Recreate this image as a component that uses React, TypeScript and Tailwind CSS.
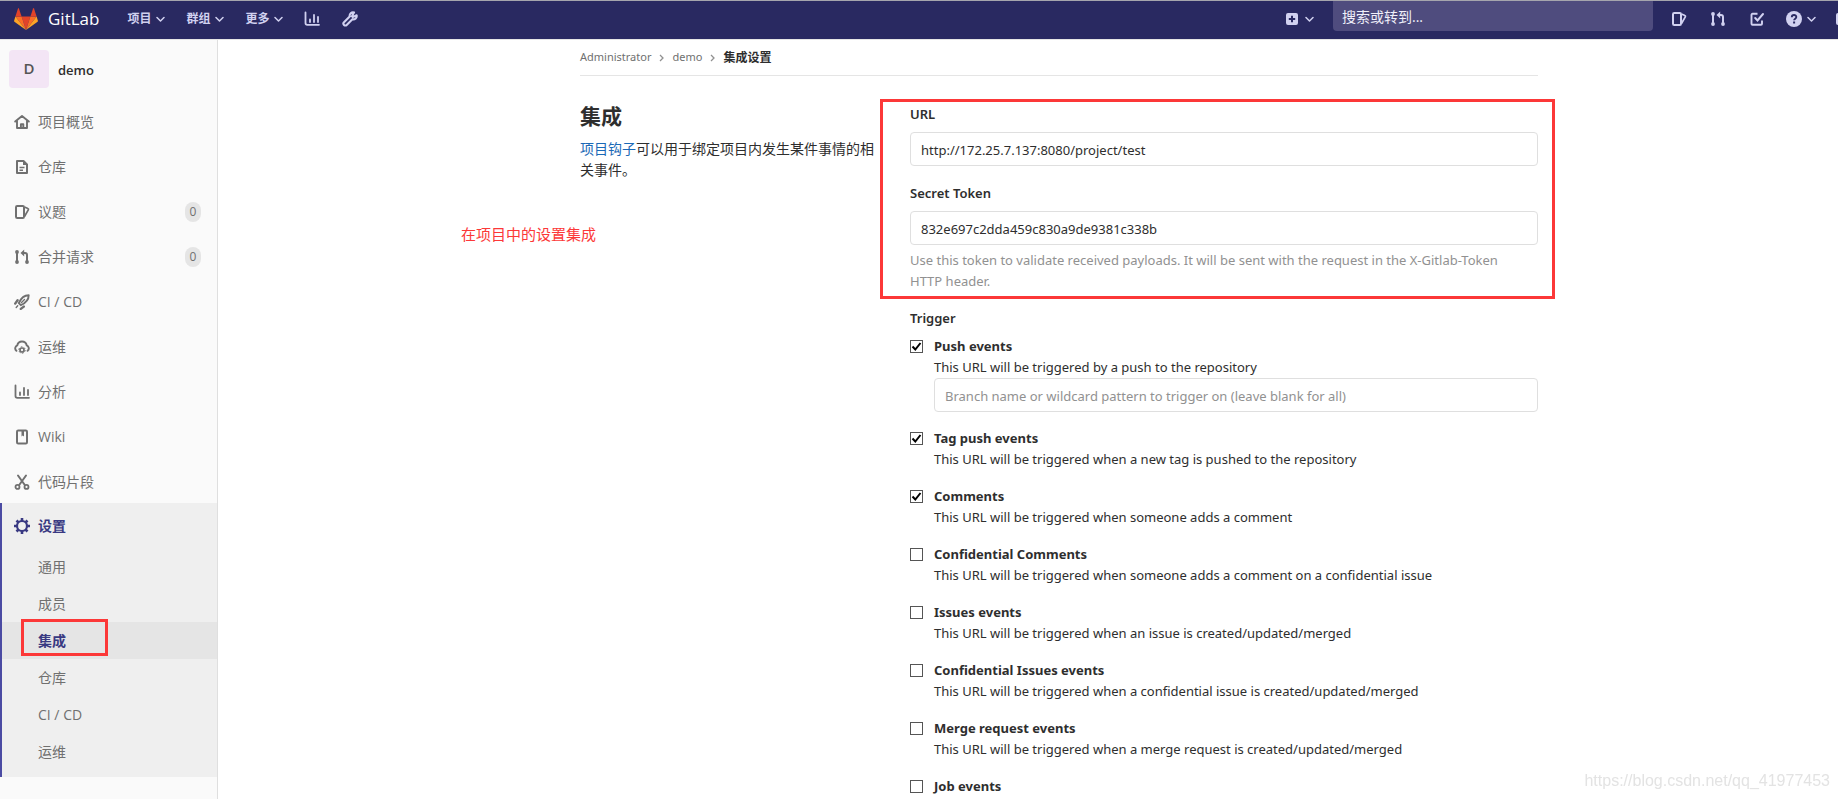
import type { ReactNode } from 'react'

type IconName =
  | 'home' | 'doc' | 'issues' | 'merge' | 'rocket' | 'cloud' | 'chart'
  | 'book' | 'scissors' | 'gear' | 'wrench' | 'plus' | 'todo' | 'help'

const icons: Record<IconName, ReactNode> = {
  home: (
    <path d="M1.2 7.6 8 2l6.8 5.6M3 6.8V14h10V6.8M6.9 13.5v-3.2h2.4v3.2" fill="none" stroke="currentColor" strokeWidth="1.9" strokeLinejoin="round" strokeLinecap="round" />
  ),
  doc: (
    <>
      <path d="M3 2h6.5L13 5.500V14H3z" fill="none" stroke="currentColor" strokeWidth="2" strokeLinejoin="round" />
      <path d="M9 1.500 13.500 6H9z" fill="currentColor" />
      <path d="M5.500 8.500h5M5.500 11.200h3.500" stroke="currentColor" strokeWidth="1.4" />
    </>
  ),
  issues: (
    <>
      <rect x="2" y="2" width="8" height="12" rx="1.200" fill="none" stroke="currentColor" strokeWidth="2" />
      <path d="m10.500 3 3.400 1.500c.5.200.7.700.500 1.200L10.500 12.500" fill="none" stroke="currentColor" strokeWidth="1.700" />
    </>
  ),
  merge: (
    <>
      <path d="M3 3v10M8 4h3a2 2 0 0 1 2 2v7" fill="none" stroke="currentColor" strokeWidth="2" />
      <path d="M10.200.5v7L6.500 4z" fill="currentColor" />
      <circle cx="3" cy="3" r="1.900" fill="currentColor" />
      <circle cx="3" cy="13" r="1.900" fill="currentColor" />
      <circle cx="13" cy="13" r="1.900" fill="currentColor" />
    </>
  ),
  rocket: (
    <>
      <path d="M14.700 1.300C10.500 1.300 7 4.200 4.800 9.200l2 2C11.800 9 14.700 5.500 14.700 1.300z" fill="none" stroke="currentColor" strokeWidth="1.900" strokeLinejoin="round" />
      <path d="M3.600 6.200 1.200 9.600M9.800 12.600l-3 2.300" stroke="currentColor" strokeWidth="2.400" strokeLinecap="round" />
      <path d="m7.500 8.500 3-3M3.700 11.800l-1.500 1.600" stroke="currentColor" strokeWidth="1.400" strokeLinecap="round" />
    </>
  ),
  cloud: (
    <>
      <path d="M2.400 11.800A3.200 3.200 0 0 1 3.300 6.300 4.800 4.800 0 0 1 12.700 6.300 3.200 3.200 0 0 1 13.600 11.800" fill="none" stroke="currentColor" strokeWidth="1.900" strokeLinecap="round" />
      <circle cx="8" cy="11" r="2" fill="none" stroke="currentColor" strokeWidth="1.700" />
      <circle cx="8" cy="11" r="3.200" fill="none" stroke="currentColor" strokeWidth="1" strokeDasharray="1.700 1.650" />
    </>
  ),
  chart: (
    <>
      <path d="M1.500 1.500V12a1.800 1.800 0 0 0 1.800 1.800H15" fill="none" stroke="currentColor" strokeWidth="1.800" strokeLinecap="round" />
      <path d="M6 8.500V11M10 4v7M14 6v5" stroke="currentColor" strokeWidth="1.800" strokeLinecap="round" />
    </>
  ),
  book: (
    <>
      <rect x="3" y="1.500" width="10" height="13" rx="1.200" fill="none" stroke="currentColor" strokeWidth="2" />
      <path d="M7.500 1.500h2.500V7.500L8.700 6.500 7.500 7.500z" fill="currentColor" />
    </>
  ),
  scissors: (
    <>
      <path d="M4 1.500 10.800 11M12 1.500 5.200 11" stroke="currentColor" strokeWidth="2" strokeLinecap="round" />
      <circle cx="3.500" cy="12.900" r="2" fill="none" stroke="currentColor" strokeWidth="1.800" />
      <circle cx="12.500" cy="12.900" r="2" fill="none" stroke="currentColor" strokeWidth="1.800" />
    </>
  ),
  gear: (
    <>
      <circle cx="8" cy="8" r="5" fill="none" stroke="currentColor" strokeWidth="2.200" />
      <path d="M8 0v3M8 13v3M0 8h3M13 8h3M2.500 2.500l2 2M11.500 11.500l2 2M2.500 13.500l2-2M11.500 4.500l2-2" stroke="currentColor" strokeWidth="2.600" />
    </>
  ),
  wrench: (
    <path d="M14.600 4.300l-2.800 1.300-1.400-1.400L12 1.500C9.500.9 7.200 2.800 7.700 5.500L2 11.200a1.900 1.900 0 0 0 2.700 2.700l5.700-5.600c2.600.5 4.800-1.500 4.200-4zM9.200 4.500l2.300 2.300" fill="none" stroke="currentColor" strokeWidth="2.100" strokeLinejoin="round" />
  ),
  plus: (
    <path fillRule="evenodd" d="M4 2h8a2 2 0 0 1 2 2v8a2 2 0 0 1-2 2H4a2 2 0 0 1-2-2V4a2 2 0 0 1 2-2zm3 2.800V7H4.800v2H7v2.200h2V9h2.200V7H9V4.800z" fill="currentColor" />
  ),
  todo: (
    <>
      <path d="M8.500 2.800H3.500a1 1 0 0 0-1 1v9a1 1 0 0 0 1 1h8.500a1 1 0 0 0 1-1V9.500" fill="none" stroke="currentColor" strokeWidth="1.900" />
      <path d="m6.200 7 2.300 2.400L14 3" fill="none" stroke="currentColor" strokeWidth="2" strokeLinecap="round" />
    </>
  ),
  help: (
    <>
      <circle cx="8" cy="8" r="8" fill="currentColor" />
      <path d="M5.800 6.200C5.800 3.200 10.300 3.300 10.300 6c0 1.700-2.200 1.600-2.200 3.300" fill="none" stroke="#292961" strokeWidth="1.900" />
      <rect x="7.100" y="10.500" width="2" height="2" fill="#292961" />
    </>
  ),
}

function Icon({ name }: { name: IconName }) {
  return (
    <svg className="w-4 h-4 shrink-0" viewBox="0 0 16 16" aria-hidden="true">
      {icons[name]}
    </svg>
  )
}

function Chevron() {
  return (
    <svg className="w-[9px] h-[9px] shrink-0" viewBox="0 0 9 9" aria-hidden="true">
      <path d="m1 2.500 3.500 3.500L8 2.500" fill="none" stroke="currentColor" strokeWidth="1.500" strokeLinecap="round" strokeLinejoin="round" />
    </svg>
  )
}

const navItems: { icon: IconName; label: string; count?: number }[] = [
  { icon: 'home', label: '项目概览' },
  { icon: 'doc', label: '仓库' },
  { icon: 'issues', label: '议题', count: 0 },
  { icon: 'merge', label: '合并请求', count: 0 },
  { icon: 'rocket', label: 'CI / CD' },
  { icon: 'cloud', label: '运维' },
  { icon: 'chart', label: '分析' },
  { icon: 'book', label: 'Wiki' },
  { icon: 'scissors', label: '代码片段' },
]

const settingItems = ['通用', '成员', '集成', '仓库', 'CI / CD', '运维']

const triggers = [
  { id: 'push', title: 'Push events', text: 'This URL will be triggered by a push to the repository', checked: true, branch: true },
  { id: 'tag', title: 'Tag push events', text: 'This URL will be triggered when a new tag is pushed to the repository', checked: true },
  { id: 'note', title: 'Comments', text: 'This URL will be triggered when someone adds a comment', checked: true },
  { id: 'c-note', title: 'Confidential Comments', text: 'This URL will be triggered when someone adds a comment on a confidential issue' },
  { id: 'issue', title: 'Issues events', text: 'This URL will be triggered when an issue is created/updated/merged' },
  { id: 'c-issue', title: 'Confidential Issues events', text: 'This URL will be triggered when a confidential issue is created/updated/merged' },
  { id: 'merge', title: 'Merge request events', text: 'This URL will be triggered when a merge request is created/updated/merged' },
  { id: 'job', title: 'Job events' },
]

const inputClass =
  'block w-full h-[34px] px-[10px] pt-[2px] border border-[#dfdfdf] rounded bg-white text-[#2e2e2e] placeholder:text-[#919191]'

function Header() {
  return (
    <header className="h-10 flex items-center overflow-hidden pb-[2px] bg-[#292961] text-[#d1d1f0] border-t border-t-[#a5a5ad] border-b border-b-[#e5e5e5]">
      <a href="#" className="flex items-center gap-[10px] ml-[14px] text-white text-[17px]">
        <svg className="w-6 h-[22px]" viewBox="0 0 24 22" aria-hidden="true">
          <path d="m12 22 4.400-13.400H7.600z" fill="#e24329" />
          <path d="M12 22 7.600 8.600H1.400z" fill="#fc6d26" />
          <path d="M1.400 8.600.1 12.700a.9.900 0 0 0 .3 1L12 22z" fill="#fca326" />
          <path d="M1.400 8.600h6.200L4.900.4a.5.500 0 0 0-.9 0z" fill="#e24329" />
          <path d="m12 22 4.400-13.400h6.200z" fill="#fc6d26" />
          <path d="m22.600 8.600 1.300 4.100a.9.900 0 0 1-.3 1L12 22z" fill="#fca326" />
          <path d="M22.600 8.600h-6.200L19.100.4a.5.500 0 0 1 .9 0z" fill="#e24329" />
        </svg>
        GitLab
      </a>
      <nav className="flex items-center gap-[21px] ml-7 text-xs font-bold">
        {['项目', '群组', '更多'].map((label) => (
          <button key={label} type="button" className="flex items-center gap-[5px]">
            {label}
            <Chevron />
          </button>
        ))}
        <div className="flex items-center gap-[22px]">
          <a href="#" aria-label="分析"><Icon name="chart" /></a>
          <a href="#" aria-label="管理"><Icon name="wrench" /></a>
        </div>
      </nav>
      <button type="button" aria-label="新建" className="flex items-center gap-[5px] ml-auto shrink-0">
        <Icon name="plus" />
        <Chevron />
      </button>
      <input
        type="text"
        aria-label="搜索"
        placeholder="搜索或转到..."
        className="self-start w-80 h-[30px] ml-[19px] px-[9px] shrink-0 rounded-b bg-[#4f4c7e] text-sm text-white placeholder:text-[#f0f0fa]"
      />
      <div className="flex items-center gap-[23px] ml-[18px] shrink-0">
        <a href="#" aria-label="议题"><Icon name="issues" /></a>
        <a href="#" aria-label="合并请求"><Icon name="merge" /></a>
        <a href="#" aria-label="待办事项"><Icon name="todo" /></a>
      </div>
      <button type="button" aria-label="帮助" className="flex items-center gap-[5px] ml-[21px] shrink-0">
        <Icon name="help" />
        <Chevron />
      </button>
      {/* user avatar, running off the window's edge */}
      <div className="w-[2px] h-3 ml-5 shrink-0 rounded-l bg-[#d1d1f0]" />
    </header>
  )
}

function Sidebar() {
  return (
    <aside className="w-[218px] shrink-0 bg-[#fafafa] border-r border-[#dfdfdf] text-sm text-[#707070]">
      <a href="#" className="flex items-center gap-[9px] h-[58px] pl-[9px] text-[#2e2e2e] text-[13px] font-semibold">
        <span className="w-10 h-[38px] flex items-center justify-center rounded bg-[#f3e5f5] text-[#555] text-[15px]">D</span>
        <span className="pt-[2px]">demo</span>
      </a>
      <ul className="pt-px">
        {navItems.map((item) => (
          <li key={item.label}>
            <a href="#" className="flex items-center gap-2 h-[45px] pl-[14px] pr-4">
              <Icon name={item.icon} />
              {item.label}
              {item.count !== undefined && (
                <span className="ml-auto w-4 h-5 flex items-center justify-center rounded-full bg-[#e5e5e5] text-xs">
                  {item.count}
                </span>
              )}
            </a>
          </li>
        ))}
        <li className="-mt-px pb-[7px] border-l-2 border-[#4b4ba3] bg-[#efefef]">
          <a href="#" className="flex items-center gap-2 h-[45px] pl-3 font-bold text-[#393982]">
            <Icon name="gear" />
            设置
          </a>
          <ul>
            {settingItems.map((label) => (
              <li key={label}>
                {label === '集成' ? (
                  <a href="#" className="relative flex items-center h-[37px] pl-9 bg-[#e5e5e5] font-bold text-[#393982]">
                    {label}
                    <span className="absolute left-[19px] -top-[3px] w-[87px] h-[37px] border-3 border-[#fc3838]" />
                  </a>
                ) : (
                  <a href="#" className="flex items-center h-[37px] pl-9">{label}</a>
                )}
              </li>
            ))}
          </ul>
        </li>
      </ul>
    </aside>
  )
}

function BreadcrumbArrow() {
  return (
    <svg className="w-[5px] h-2 mx-2 text-[#919191]" viewBox="0 0 5 8" aria-hidden="true">
      <path d="m1 1 3 3-3 3" fill="none" stroke="currentColor" strokeWidth="1.300" />
    </svg>
  )
}

function Breadcrumb() {
  return (
    <nav className="flex items-center h-9 border-b border-[#e5e5e5] text-[11px] text-[#707070] font-['Noto_Sans','Noto_Sans_CJK_SC',sans-serif]">
      <a href="#">Administrator</a>
      <BreadcrumbArrow />
      <a href="#">demo</a>
      <BreadcrumbArrow />
      <a href="#" className="text-xs font-bold text-[#2e2e2e]">集成设置</a>
    </nav>
  )
}

export default function App() {
  return (
    <div className="min-h-screen flex flex-col bg-white text-[#2e2e2e] font-['Open_Sans','Noto_Sans_CJK_SC',sans-serif]">
      <Header />
      <div className="flex flex-1">
        <Sidebar />
        <main className="flex-1 pl-[62px]">
          <div className="relative max-w-[958px] mx-auto">
            <Breadcrumb />
            <div className="grid grid-cols-[299px_1fr] gap-[31px] pt-[26px]">
              <div>
                <h4 className="mb-2 text-[21px] leading-7 font-bold">集成</h4>
                <p className="text-sm leading-[21px]">
                  <a href="#" className="text-[#1b69b6]">项目钩子</a>可以用于绑定项目内发生某件事情的相关事件。
                </p>
              </div>

              <form className="pt-[2px] text-[13px] leading-[21px] font-['Noto_Sans','Noto_Sans_CJK_SC',sans-serif]">
                <div className="relative">
                  <label htmlFor="hook-url" className="block mb-[7px] font-semibold">URL</label>
                  <input id="hook-url" type="text" defaultValue="http://172.25.7.137:8080/project/test" className={inputClass} />
                  <label htmlFor="hook-token" className="block mt-[17px] mb-[7px] font-semibold">Secret Token</label>
                  <input id="hook-token" type="text" defaultValue="832e697c2dda459c830a9de9381c338b" className={inputClass} />
                  <p className="mt-[5px] pr-5 text-[#919191]">
                    Use this token to validate received payloads. It will be sent with the request in the X-Gitlab-Token HTTP header.
                  </p>
                  <span className="absolute -top-[5px] -bottom-[7px] -left-[30px] -right-[17px] border-3 border-[#fc3838] pointer-events-none" />
                </div>

                <fieldset className="mt-4">
                  <legend className="mb-[7px] font-semibold">Trigger</legend>
                  {triggers.map((t) => (
                    <div key={t.id} className="flex gap-[11px] mb-4 last:mb-0">
                      <span className="relative w-[13px] h-[13px] mt-1 shrink-0">
                        <input
                          id={t.id}
                          type="checkbox"
                          defaultChecked={t.checked}
                          className="peer block appearance-none w-[13px] h-[13px] border border-[#555] bg-white"
                        />
                        <svg className="absolute inset-0 hidden peer-checked:block pointer-events-none" viewBox="0 0 13 13" aria-hidden="true">
                          <path d="m2.500 6.500 2.800 3L10.500 3" fill="none" stroke="#000" strokeWidth="2" />
                        </svg>
                      </span>
                      <div className="flex-1">
                        <label htmlFor={t.id} className="block font-bold">{t.title}</label>
                        {t.text && <p>{t.text}</p>}
                        {t.branch && (
                          <input
                            type="text"
                            aria-label="Branch filter"
                            placeholder="Branch name or wildcard pattern to trigger on (leave blank for all)"
                            className={inputClass}
                          />
                        )}
                      </div>
                    </div>
                  ))}
                </fieldset>
              </form>
            </div>
            <p className="absolute top-[184px] -left-[119px] text-[15px] leading-5 text-[#fc3838]">在项目中的设置集成</p>
          </div>
        </main>
      </div>
      <p className="fixed right-2 bottom-2 text-base leading-5 text-[#e3e3e3] font-['Liberation_Sans',sans-serif]">
        https://blog.csdn.net/qq_41977453
      </p>
    </div>
  )
}
